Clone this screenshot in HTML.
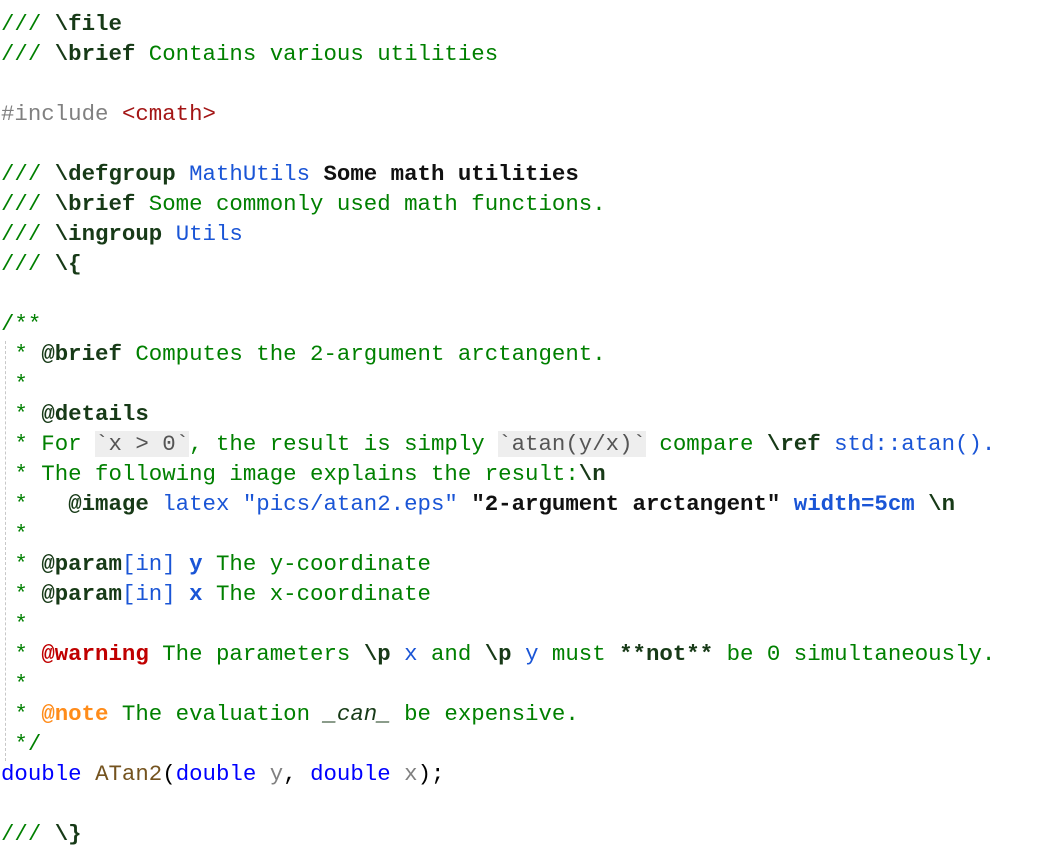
<!DOCTYPE html>
<html><head><meta charset="utf-8"><style>
html,body{margin:0;padding:0;background:#fff;width:1037px;height:855px;overflow:hidden}
pre{margin:0;padding:9px 0 0 1px;font-family:"Liberation Mono",monospace;font-size:22.4px;line-height:30px;color:#008000;position:relative}
.g{position:absolute;left:5px;top:341px;height:420px;border-left:1px dashed #c8c8c8}
.t{color:#173a17;font-weight:bold}
.r{color:#1a55d6}
.rb{color:#1a55d6;font-weight:bold}
.k{color:#111;font-weight:bold}
.pp{color:#808080}
.s{color:#a31515}
.c{background:#eeeeee;color:#555}
.w{color:#c00000;font-weight:bold}
.n{color:#ff8c1a;font-weight:bold}
.kw{color:#0000ff}
.f{color:#74531f}
.p{color:#808080}
.d{color:#000}
</style></head><body><pre><div class="g"></div>/// <span class="t">\file</span>
/// <span class="t">\brief</span> Contains various utilities

<span class="pp">#include</span> <span class="s">&lt;cmath&gt;</span>

/// <span class="t">\defgroup</span> <span class="r">MathUtils</span> <span class="k">Some math utilities</span>
/// <span class="t">\brief</span> Some commonly used math functions.
/// <span class="t">\ingroup</span> <span class="r">Utils</span>
/// <span class="t">\{</span>

/**
 * <span class="t">@brief</span> Computes the 2-argument arctangent.
 *
 * <span class="t">@details</span>
 * For <span class="c">`x &gt; 0`</span>, the result is simply <span class="c">`atan(y/x)`</span> compare <span class="t">\ref</span> <span class="r">std::atan().</span>
 * The following image explains the result:<span class="t">\n</span>
 *   <span class="t">@image</span> <span class="r">latex</span> <span class="r">"pics/atan2.eps"</span> <span class="k">"2-argument arctangent"</span> <span class="rb">width=5cm</span> <span class="t">\n</span>
 *
 * <span class="t">@param</span><span class="r">[in]</span> <span class="rb">y</span> The y-coordinate
 * <span class="t">@param</span><span class="r">[in]</span> <span class="rb">x</span> The x-coordinate
 *
 * <span class="w">@warning</span> The parameters <span class="t">\p</span> <span class="r">x</span> and <span class="t">\p</span> <span class="r">y</span> must <span class="t">**not**</span> be 0 simultaneously.
 *
 * <span class="n">@note</span> The evaluation <i style="color:#173a17">_can_</i> be expensive.
 */
<span class="kw">double</span> <span class="f">ATan2</span><span class="d">(</span><span class="kw">double</span> <span class="p">y</span><span class="d">,</span> <span class="kw">double</span> <span class="p">x</span><span class="d">);</span>

/// <span class="t">\}</span>
</pre></body></html>
